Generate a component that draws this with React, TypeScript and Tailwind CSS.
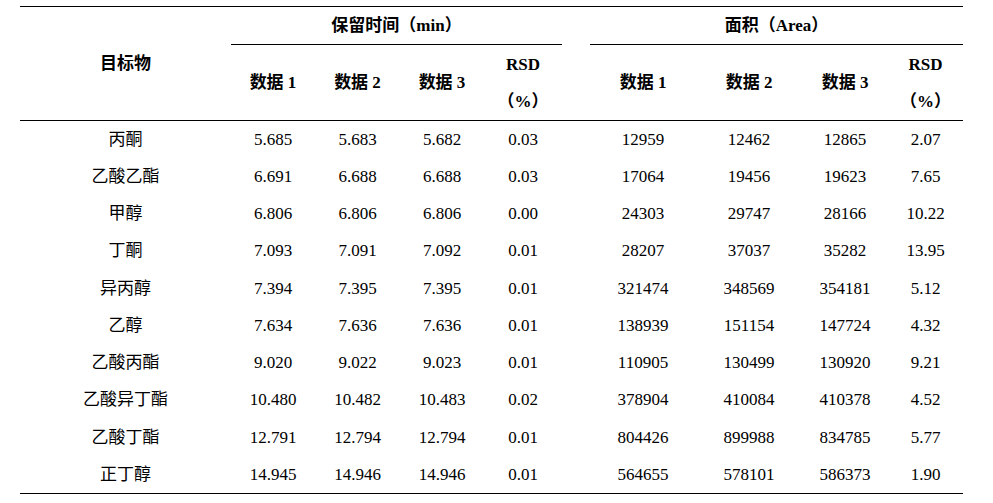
import React from "react";

type Row = {
  name: string;
  rt: [string, string, string, string];
  area: [string, string, string, string];
};

const rows: Row[] = [
  { name: "丙酮", rt: ["5.685", "5.683", "5.682", "0.03"], area: ["12959", "12462", "12865", "2.07"] },
  { name: "乙酸乙酯", rt: ["6.691", "6.688", "6.688", "0.03"], area: ["17064", "19456", "19623", "7.65"] },
  { name: "甲醇", rt: ["6.806", "6.806", "6.806", "0.00"], area: ["24303", "29747", "28166", "10.22"] },
  { name: "丁酮", rt: ["7.093", "7.091", "7.092", "0.01"], area: ["28207", "37037", "35282", "13.95"] },
  { name: "异丙醇", rt: ["7.394", "7.395", "7.395", "0.01"], area: ["321474", "348569", "354181", "5.12"] },
  { name: "乙醇", rt: ["7.634", "7.636", "7.636", "0.01"], area: ["138939", "151154", "147724", "4.32"] },
  { name: "乙酸丙酯", rt: ["9.020", "9.022", "9.023", "0.01"], area: ["110905", "130499", "130920", "9.21"] },
  { name: "乙酸异丁酯", rt: ["10.480", "10.482", "10.483", "0.02"], area: ["378904", "410084", "410378", "4.52"] },
  { name: "乙酸丁酯", rt: ["12.791", "12.794", "12.794", "0.01"], area: ["804426", "899988", "834785", "5.77"] },
  { name: "正丁醇", rt: ["14.945", "14.946", "14.946", "0.01"], area: ["564655", "578101", "586373", "1.90"] },
];

export default function App() {
  return (
    <div className="w-[993px] h-[503px] bg-white overflow-hidden pt-[6px] pl-[20px] font-[family-name:Liberation_Serif,Noto_Sans_CJK_SC,serif]">
      <table className="table-fixed border-collapse w-[943px] text-[17px] text-black text-center">
        <colgroup>
          <col className="w-[211px]" />
          <col className="w-[84px]" />
          <col className="w-[85px]" />
          <col className="w-[84px]" />
          <col className="w-[78px]" />
          <col className="w-[28px]" />
          <col className="w-[106px]" />
          <col className="w-[106px]" />
          <col className="w-[86px]" />
          <col className="w-[75px]" />
        </colgroup>
        <thead className="font-bold">
          <tr className="h-[38px] border-t border-black">
            <th rowSpan={2} className="font-bold p-0 align-middle">
              目标物
            </th>
            <th colSpan={4} className="font-bold p-0 border-b border-black">
              保留时间（min）
            </th>
            <th className="p-0" />
            <th colSpan={4} className="font-bold p-0 border-b border-black">
              面积（Area）
            </th>
          </tr>
          <tr className="h-[76px] border-b border-black">
            <th className="font-bold p-0">数据 1</th>
            <th className="font-bold p-0">数据 2</th>
            <th className="font-bold p-0">数据 3</th>
            <th className="font-bold p-0 leading-[37px] pt-[1px]">
              RSD
              <br />
              （%）
            </th>
            <th className="p-0" />
            <th className="font-bold p-0">数据 1</th>
            <th className="font-bold p-0">数据 2</th>
            <th className="font-bold p-0">数据 3</th>
            <th className="font-bold p-0 leading-[37px] pt-[1px]">
              RSD
              <br />
              （%）
            </th>
          </tr>
        </thead>
        <tbody className="border-b border-black">
          {rows.map((r) => (
            <tr key={r.name} className="h-[37.3px]">
              <td className="p-0">{r.name}</td>
              {r.rt.map((v, i) => (
                <td key={"rt" + i} className="p-0">
                  {v}
                </td>
              ))}
              <td className="p-0" />
              {r.area.map((v, i) => (
                <td key={"a" + i} className="p-0">
                  {v}
                </td>
              ))}
            </tr>
          ))}
        </tbody>
      </table>
    </div>
  );
}
